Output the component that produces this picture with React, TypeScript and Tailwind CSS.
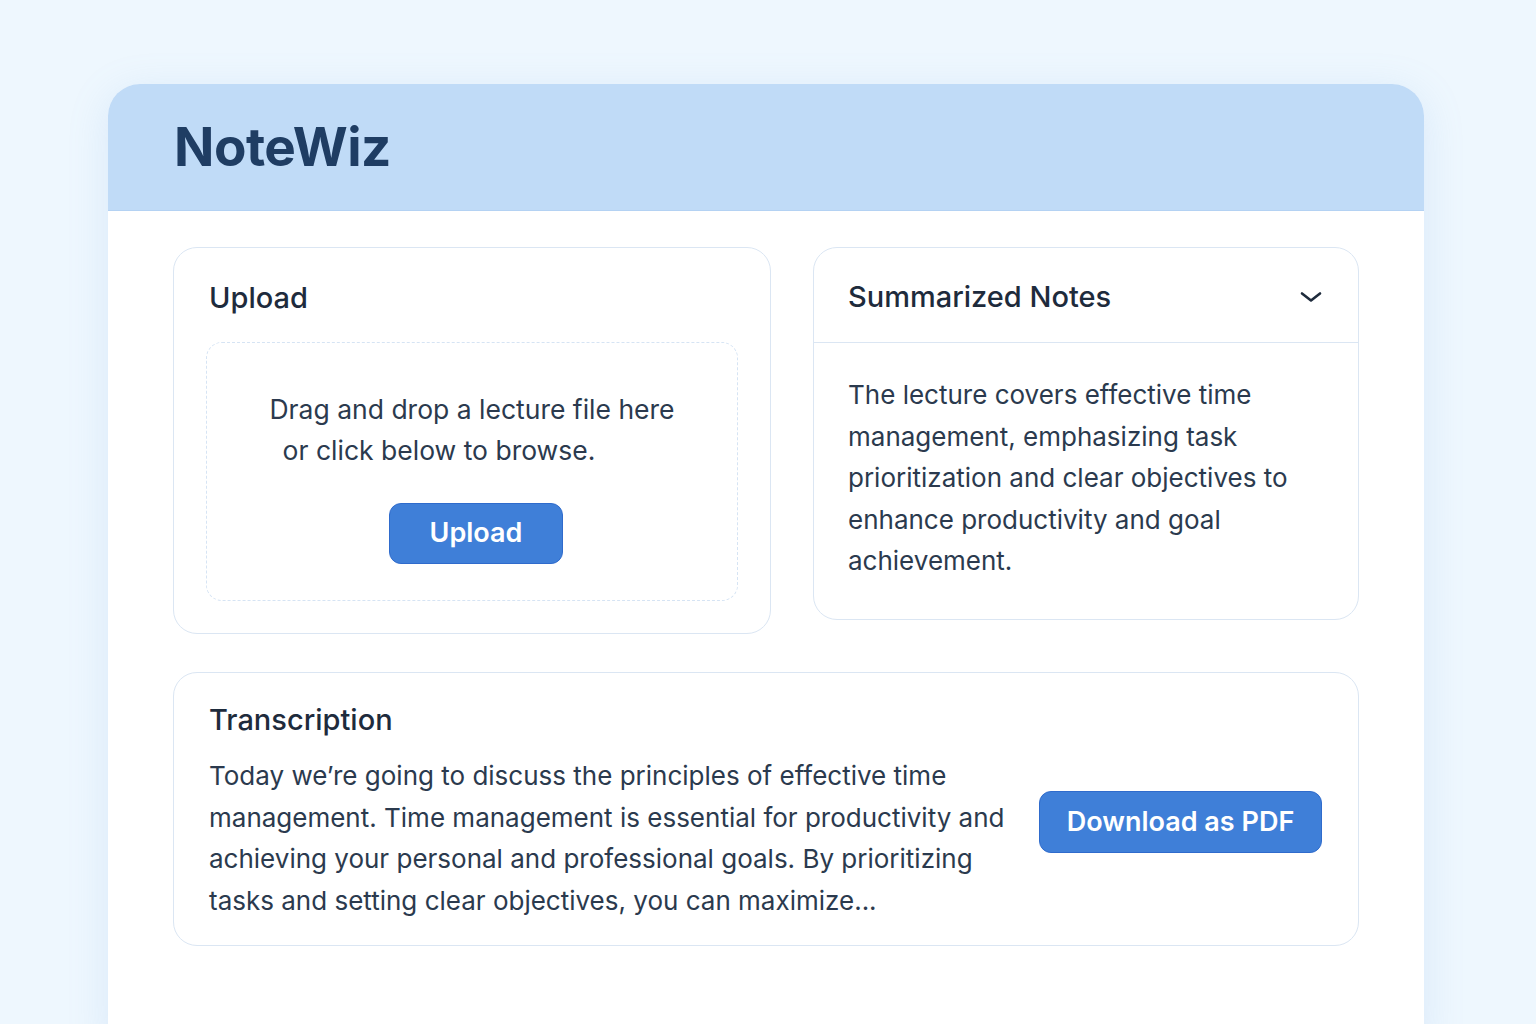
import React from "react";

export default function App() {
  return (
    <div
      className="h-screen w-full overflow-hidden bg-[#eef7fe] pt-[84px]"
      style={{ fontFamily: "Inter, 'Noto Sans', sans-serif" }}
    >
      <div className="ml-[108px] h-[960px] w-[1316px] overflow-hidden rounded-t-[32px] bg-white shadow-[0_8px_40px_rgba(120,170,230,0.18)]">
        <div className="flex h-[127px] items-center border-b border-[#b4d2f3] bg-[#c0dbf7] pl-[66px]">
          <h1 className="text-[53px] font-bold leading-none tracking-[-0.5px] text-[#1f3d63]">NoteWiz</h1>
        </div>

        <div className="px-[65px] pt-[36px]">
          <div className="grid grid-cols-[598px_546px] items-start gap-[42px]">
            {/* Upload card */}
            <div className="rounded-[24px] border border-[#dbe6f3] bg-white px-[32px] pb-[32px] pt-[32px]">
              <h2 className="pl-[3px] text-[29px] font-medium leading-[36px] text-[#1e2b3c]">Upload</h2>
              <div className="mt-[26px] flex h-[259px] flex-col items-center rounded-[16px] border-[1.5px] border-dashed border-[#d6e4f4] pt-[46px]">
                <p className="text-center text-[26.5px] leading-[41px] text-[#2b3a4e]">
                  <span className="block">Drag and drop a lecture file here</span>
                  <span className="block pr-[66px]">or click below to browse.</span>
                </p>
                <button className="ml-[8px] mt-[32px] h-[61px] w-[174px] rounded-[12px] border border-[#2f6bcc] bg-[#3f7fd8] text-[27px] font-semibold text-white">
                  Upload
                </button>
              </div>
            </div>

            {/* Summarized notes card */}
            <div className="rounded-[24px] border border-[#dbe6f3] bg-white">
              <div className="flex h-[95px] items-center justify-between border-b border-[#dbe6f3] pl-[34px] pr-[36px] pt-[4px]">
                <h2 className="text-[29px] font-medium leading-[36px] text-[#1e2b3c]">Summarized Notes</h2>
                <svg width="22" height="12" viewBox="0 0 22 12" fill="none">
                  <path d="M2 2.5 L11 9.5 L20 2.5" stroke="#1e2b3c" strokeWidth="2.6" strokeLinecap="round" strokeLinejoin="round" />
                </svg>
              </div>
              <p className="pb-[37px] pl-[34px] pr-[34px] pt-[31px] text-[26px] leading-[41.5px] text-[#2b3a4e]">
                The lecture covers effective time management, emphasizing task prioritization and clear objectives to enhance productivity and goal achievement.
              </p>
            </div>
          </div>

          {/* Transcription card */}
          <div className="mt-[38px] flex items-start justify-between rounded-[24px] border border-[#dbe6f3] bg-white pb-[23px] pl-[35px] pr-[36px] pt-[29px]">
            <div className="w-[810px]">
              <h2 className="text-[29px] font-medium leading-[36px] text-[#1e2b3c]">Transcription</h2>
              <p className="mt-[17px] text-[26px] leading-[41.7px] text-[#2b3a4e]">
                Today we’re going to discuss the principles of effective time management. Time management is essential for productivity and achieving your personal and professional goals. By prioritizing tasks and setting clear objectives, you can maximize...
              </p>
            </div>
            <button className="mt-[89px] h-[62px] w-[283px] shrink-0 rounded-[12px] border border-[#2f6bcc] bg-[#3f7fd8] text-[27px] font-semibold text-white">
              Download as PDF
            </button>
          </div>
        </div>
      </div>
    </div>
  );
}
